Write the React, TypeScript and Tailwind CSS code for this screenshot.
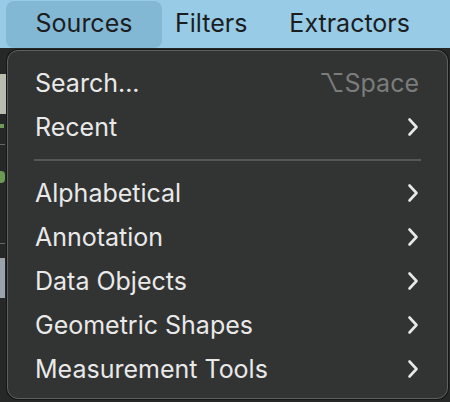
import React from "react";

const font = { fontFamily: "Inter, 'Noto Sans', 'DejaVu Sans', sans-serif" };

function Chevron() {
  return (
    <svg width="12" height="20" viewBox="0 0 12 20" className="shrink-0">
      <path d="M2.5 2.5 L9.5 10 L2.5 17.5" fill="none" stroke="#e8e8e8" strokeWidth="2.6" strokeLinecap="round" strokeLinejoin="round" />
    </svg>
  );
}

function Row({ label, right }: { label: string; right?: React.ReactNode }) {
  return (
    <div className="flex h-[44px] items-center justify-between pl-[27px] pr-[28px]">
      <span className="text-[25px] leading-none text-[#e9e9e9]">{label}</span>
      {right}
    </div>
  );
}

export default function App() {
  return (
    <div className="relative h-[402px] w-[450px] overflow-hidden bg-[#262727]" style={font}>
      <div className="flex h-[48px] items-center bg-[#97cbe6]">
        <div className="ml-[6px] flex h-[47px] w-[156px] items-center justify-center rounded-[8px] bg-[#83b8d4]">
          <span className="text-[25px] text-[#1c1d1f]">Sources</span>
        </div>
        <span className="ml-[13px] text-[25px] text-[#1c1d1f]">Filters</span>
        <span className="ml-[42px] text-[25px] text-[#1c1d1f]">Extractors</span>
      </div>
      <div className="h-[354px] w-[7px] flex flex-col">
        <div className="mt-[26px] h-[40px] w-[6px] bg-[#b8bdb0]" />
        <div className="mt-[10px] h-[4px] w-[4px] bg-[#6f9a5a]" />
        <div className="mt-[16px] h-[1px] w-[5px] bg-[#666]" />
        <div className="mt-[26px] h-[12px] w-[5px] rounded-r bg-[#6b9a55]" />
        <div className="mt-[60px] h-[1px] w-[5px] bg-[#666]" />
        <div className="mt-[14px] h-[40px] w-[5px] bg-[#9aa3ab]" />
      </div>
      <div className="absolute left-[7px] top-[50px] h-[349px] w-[441px] rounded-[11px] border border-[#5e5f5f] bg-[#323333] shadow-[0_0_0_1px_#161616] py-[10px]">
        <Row label="Search..." right={<span className="text-[25px] leading-none text-[#7b7c7c]">⌥Space</span>} />
        <Row label="Recent" right={<Chevron />} />
        <div className="flex h-[22px] items-center px-[26px]">
          <div className="h-[2px] w-full bg-[#565757]" />
        </div>
        <Row label="Alphabetical" right={<Chevron />} />
        <Row label="Annotation" right={<Chevron />} />
        <Row label="Data Objects" right={<Chevron />} />
        <Row label="Geometric Shapes" right={<Chevron />} />
        <Row label="Measurement Tools" right={<Chevron />} />
      </div>
    </div>
  );
}
